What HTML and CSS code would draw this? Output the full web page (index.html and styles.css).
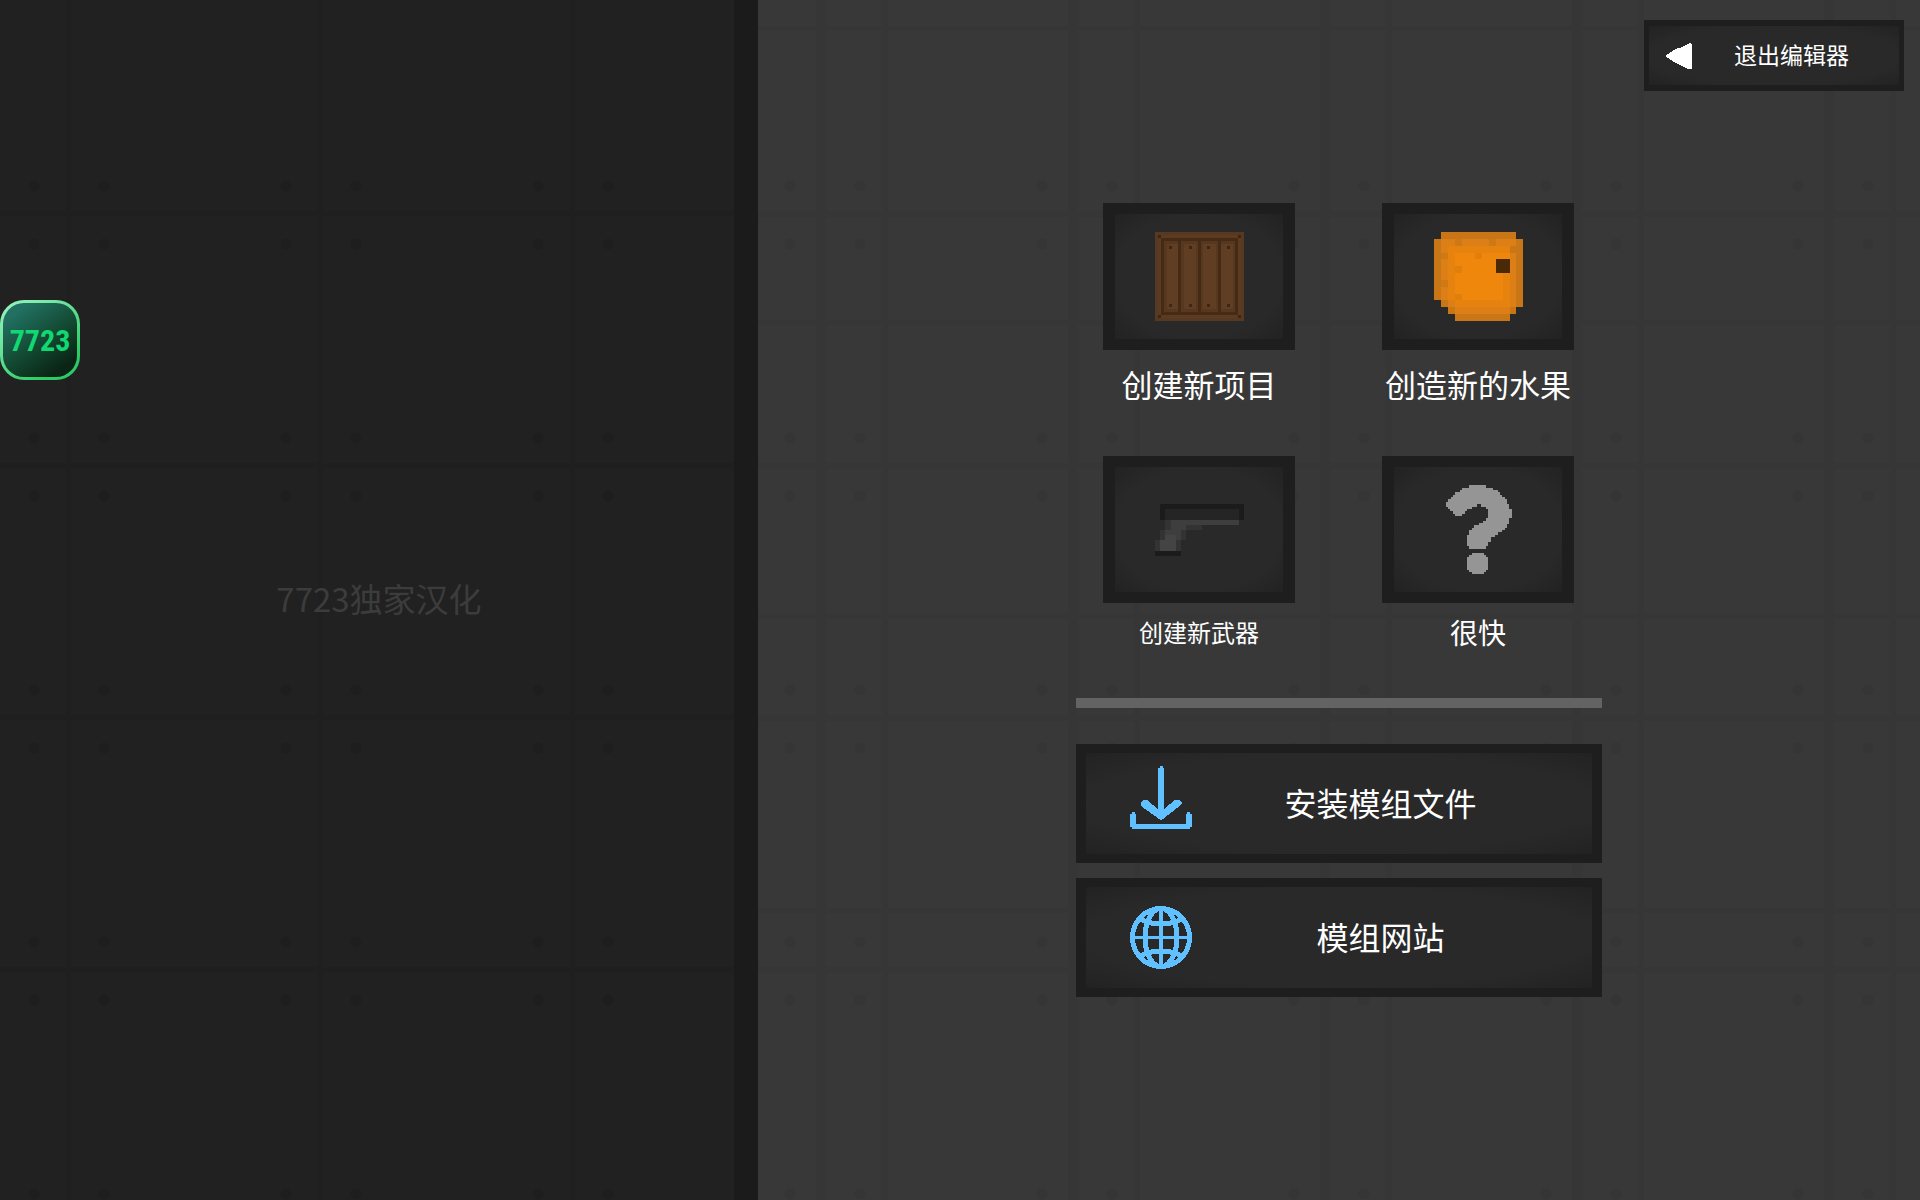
FILE: index.html
```html
<!DOCTYPE html>
<html lang="zh-CN">
<head>
<meta charset="utf-8">
<title>模组编辑器</title>
<link rel="stylesheet" href="styles.css">
</head>
<body>
<div class="editor">
  <aside class="preview"><p class="preview-note">7723独家汉化</p></aside>
  <main class="workspace">
    <header class="topbar">
      <button class="panel exit" type="button">
        <svg class="exit-icon" viewBox="0 0 26 26" aria-hidden="true"><path d="M26 1V26H21V25H19V24H17V23H15V22H13V21H11V20H9V19H7V18H6V17H4V16H3V15H1V14H0V12H1V11H3V10H4V9H6V8H7V7H9V6H11V5H15V4H17V3H19V2H21V1H23V0H25V1Z" fill="#fff"/></svg>
        <span class="exit-text">退出编辑器</span>
      </button>
    </header>
    <section class="menu">
      <div class="tiles">
        <div class="tile">
          <button class="panel tile-button" type="button" aria-labelledby="t1">
            <svg width="89" height="89" viewBox="195 126 267 267" aria-hidden="true">
              <path fill="#573820" d="M195 126h267v267H195z"/>
              <path fill="#4d3019" d="M204 135h249v249H204z"/>
              <path fill="#5b3b21" d="M213 135h231v9H213zM213 375h231v9H213zM204 144h9v231h-9zM444 144h9v231h-9z"/>
              <path fill="#452b16" d="M213 144h231v231H213z"/>
              <path fill="#57381f" d="M222 153h42v213h-42zM273 153h51v213h-51zM333 153h51v213h-51zM393 153h42v213h-42z"/>
              <path fill="#5f3e23" d="M231 162h33v195h-33zM282 162h36v195h-36zM339 162h39v195h-39zM393 162h36v195h-36z"/>
              <path fill="#3f2613" d="M237 168h9v9h-9zM297 168h9v9h-9zM351 168h9v9h-9zM411 168h9v9h-9zM237 342h9v9h-9zM297 342h9v9h-9zM351 342h9v9h-9zM411 342h9v9h-9zM204 135h9v9h-9zM444 135h9v9h-9zM204 375h9v9h-9zM444 375h9v9h-9z"/>
            </svg>
          </button>
          <span class="label" id="t1">创建新项目</span>
        </div>
        <div class="tile">
          <button class="panel tile-button" type="button" aria-labelledby="t2">
            <svg width="89" height="89" viewBox="189 126 267 267" aria-hidden="true">
              <path fill="#c97617" d="M210 126H435V147H456V351H435V372H417V393H252V372H231V351H210V330H189V147H210Z"/>
              <path fill="#dc7f17" d="M210 147H435V168H417V189H435V351H417V372H252V351H231V330H210Z"/>
              <path fill="#e6830f" d="M231 168H417V351H252V330H231Z"/>
              <path fill="#ee870b" d="M252 189H417V249H396V330H252Z"/>
              <path fill="#cf7914" d="M252 147h21v21h-21zM354 147h21v21h-21zM210 189h21v18h-21zM210 270h21v21h-21z"/>
              <path fill="#e17e0c" d="M312 189h21v18h-21zM252 228h21v21h-21zM252 312h21v18h-21z"/>
              <path fill="#4a2a06" d="M375 207h42v42h-42z"/>
            </svg>
          </button>
          <span class="label" id="t2">创造新的水果</span>
        </div>
        <div class="tile">
          <button class="panel tile-button" type="button" aria-labelledby="t3">
            <svg width="89" height="52" viewBox="195 174 267 156" aria-hidden="true">
              <path fill="#1b1b1b" d="M210 174H462V222H210ZM195 315H273V330H195Z"/>
              <path fill="#252525" d="M225 189H447V222H225Z"/>
              <path fill="#333" d="M225 222H336V252H288V282H273V315H195V282H210V252H225Z"/>
              <path fill="#3e3e3e" d="M243 222H447V237H288V252H273V282H258V315H210V282H225V252H243Z"/>
              <path fill="#444" d="M225 267H258V315H210V282H225Z"/>
            </svg>
          </button>
          <span class="label label-small" id="t3">创建新武器</span>
        </div>
        <div class="tile">
          <button class="panel tile-button" type="button" aria-labelledby="t4">
            <svg width="67" height="89" viewBox="222 117 201 267" aria-hidden="true">
              <path fill="#959595" d="M294 117H345V126H366V132H381V138H387V146H393V152H402V159H408V174H414V189H423V216H414V234H408V246H402V252H393V258H381V266H372V274H360V287H351V300H345V309H294V300H288V266H294V252H303V246H309V237H324V231H336V225H345V216H351V189H345V183H330V174H318V183H303V189H288V196H282V204H273V210H252V204H246V196H237V189H231V183H225V168H231V159H240V152H246V146H252V138H267V132H273V126H294ZM303 321H339V327H345V334H351V372H345V378H339V384H303V378H294V372H288V334H294V327H303Z"/>
            </svg>
          </button>
          <span class="label label-medium" id="t4">很快</span>
        </div>
      </div>
      <hr class="divider">
      <div class="actions">
        <button class="panel action" type="button">
          <svg width="62" height="76" viewBox="0 0 62 76" aria-hidden="true"><path fill="#61c0ff" d="M30 0h3v2h1V50H28V2h2ZM11 36l3-2h3l11 9h6l11-9h4l3 3-1 2-18 14-2 1-2-1-18-13ZM2 46h3v2h1v10H56V48h1v-2h3v2h2v13h-2v2H2v-2H0V48h2Z"/></svg>
          <span class="action-text">安装模组文件</span>
        </button>
        <button class="panel action" type="button">
          <svg width="62" height="63" viewBox="0 0 62 63" aria-hidden="true"><g fill="none" stroke="#61c0ff" stroke-width="4"><ellipse cx="31" cy="31.5" rx="28.5" ry="29" stroke-width="5"/><ellipse cx="31" cy="31.5" rx="16" ry="29" stroke-width="5"/><path d="M31 1V62"/><path stroke-width="3" d="M1 31.500H61"/><path stroke-width="5" d="M9 12Q18 18 31 18T53 12M9 51Q18 45 31 45T53 51"/></g></svg>
          <span class="action-text">模组网站</span>
        </button>
      </div>
    </section>
  </main>
  <button class="badge" type="button">7723</button>
</div>
</body>
</html>
```
FILE: styles.css
```css
* { box-sizing: border-box; }

body {
  margin: 0;
  background: #383838;
  color: #fff;
  font-family: "Noto Sans CJK SC", sans-serif;
}

button {
  margin: 0;
  color: inherit;
  font: inherit;
  cursor: pointer;
}

svg { display: block; flex: none; shape-rendering: crispEdges; }

.editor {
  position: relative;
  display: flex;
  min-height: 100vh;
}

/* Left preview pane with a faint tiled floor */
.preview {
  display: flex;
  align-items: center;
  justify-content: center;
  width: 758px;
  flex: none;
  border-right: 24px solid #1b1b1b;
  padding: 0 0 4px 24px;
  background:
    radial-gradient(circle, #1e1e1e 5px, transparent 6px) -92px 60px / 252px 252px,
    radial-gradient(circle, #1e1e1e 5px, transparent 6px) -22px 60px / 252px 252px,
    radial-gradient(circle, #1e1e1e 5px, transparent 6px) -92px 118px / 252px 252px,
    radial-gradient(circle, #1e1e1e 5px, transparent 6px) -22px 118px / 252px 252px,
    linear-gradient(90deg, #1f1f20 5px, transparent 5px) 66px 0 / 252px 252px,
    linear-gradient(#1f1f1f 5px, transparent 5px) 0 211px / 252px 252px,
    #212121;
}

.preview-note {
  margin: 0;
  color: #3c3c3c;
  font-size: 33px;
  line-height: 48px;
}

.workspace {
  flex: 1;
  display: flex;
  flex-direction: column;
  background:
    radial-gradient(circle, #353535 5px, transparent 6px) -94px 60px / 252px 252px,
    radial-gradient(circle, #353535 5px, transparent 6px) -24px 60px / 252px 252px,
    radial-gradient(circle, #353535 5px, transparent 6px) -94px 118px / 252px 252px,
    radial-gradient(circle, #353535 5px, transparent 6px) -24px 118px / 252px 252px,
    linear-gradient(90deg, #363636 10px, transparent 10px) 58px 0 / 252px 252px,
    linear-gradient(90deg, #363636 6px, transparent 6px) 124px 0 / 252px 252px,
    linear-gradient(#363636 6px, transparent 6px) 0 211px / 252px 252px,
    linear-gradient(#363636 5px, transparent 5px) 0 26px / 252px 294px,
    #383838;
}

.topbar {
  display: flex;
  justify-content: flex-end;
  padding: 20px 16px 0;
}

.panel {
  display: flex;
  align-items: center;
  border: 0 solid #1e1e1e;
  border-radius: 0;
  padding: 0;
  background: radial-gradient(ellipse farthest-corner, #292929 70%, #222 100%);
}

.exit {
  width: 260px;
  height: 71px;
  border-width: 6px 5px;
  padding: 0 20px 0 17px;
  font-size: 23px;
}

.exit-icon { width: 26px; height: 26px; }
.exit-text { flex: 1; padding: 0 0 4px 12px; text-align: center; }

.menu {
  display: flex;
  flex-direction: column;
  align-self: center;
  width: 526px;
  padding-top: 112px;
}

.tiles {
  display: grid;
  grid-template-columns: 192px 192px;
  column-gap: 87px;
  padding-left: 27px;
}

.tile {
  display: flex;
  flex-direction: column;
  align-items: center;
  height: 253px;
}

.tile-button {
  justify-content: center;
  width: 192px;
  height: 147px;
  border-width: 11px 12px;
}

.label {
  padding-top: 11px;
  font-size: 31px;
  line-height: 46px;
  white-space: nowrap;
}

.label-small { padding-top: 6px; font-size: 24px; }
.label-medium { padding-top: 6px; font-size: 28px; }

.divider {
  width: 100%;
  height: 10px;
  margin: -11px 0 36px;
  border: 0;
  background: #636363;
}

.actions { display: flex; flex-direction: column; gap: 15px; }

.action {
  width: 100%;
  height: 119px;
  border-width: 9px 10px;
  padding: 0 23px 0 44px;
  font-size: 32px;
}

.action-text { flex: 1; padding-bottom: 4px; text-align: center; }

/* Floating badge docked to the window edge */
.badge {
  position: absolute;
  left: 0;
  top: 300px;
  width: 80px;
  height: 80px;
  border: 3px solid transparent;
  border-radius: 24px;
  padding: 0;
  background:
    linear-gradient(145deg, #217062 15%, #12472f 55%, #0a2415 85%) padding-box,
    linear-gradient(145deg, #9df5c4, #2ccb66 80%) border-box;
  color: #12d873;
  font: bold 30px "Liberation Sans Narrow", "Roboto Condensed", "Roboto", sans-serif;
  text-align: center;
}
```
